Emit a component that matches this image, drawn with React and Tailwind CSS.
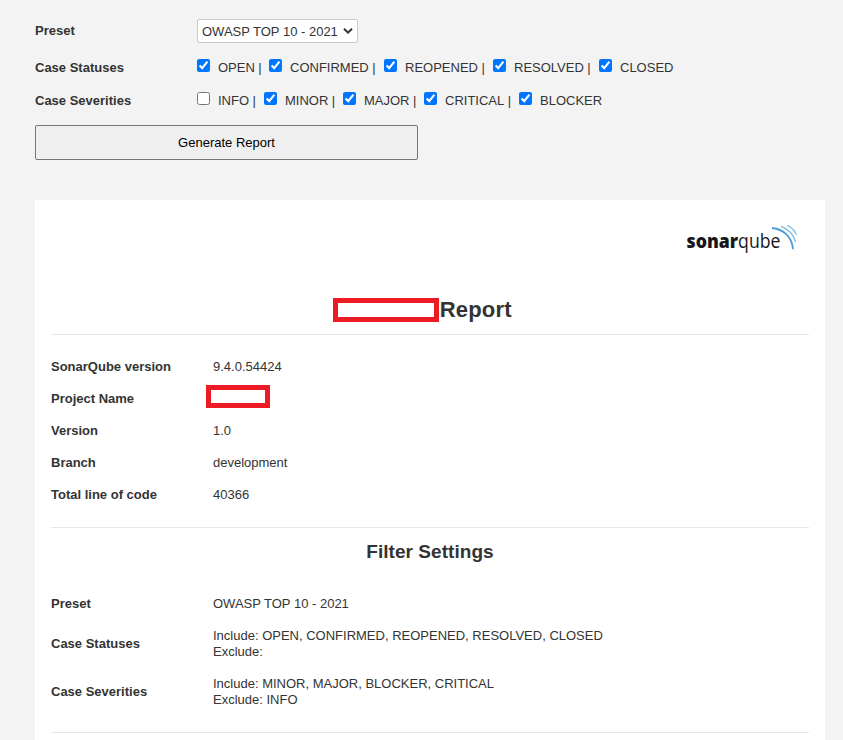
const statuses = [
  { name: 'OPEN', checked: true, width: 'w-[72px]' },
  { name: 'CONFIRMED', checked: true, width: 'w-[115px]' },
  { name: 'REOPENED', checked: true, width: 'w-[109px]' },
  { name: 'RESOLVED', checked: true, width: 'w-[106px]' },
  { name: 'CLOSED', checked: true, width: 'w-[90px]' },
];

const severities = [
  { name: 'INFO', checked: false, width: 'w-[67px]' },
  { name: 'MINOR', checked: true, width: 'w-[79px]' },
  { name: 'MAJOR', checked: true, width: 'w-[81px]' },
  { name: 'CRITICAL', checked: true, width: 'w-[95px]' },
  { name: 'BLOCKER', checked: true, width: 'w-[90px]' },
];

const details = [
  ['SonarQube version', '9.4.0.54424'],
  ['Project Name', null],
  ['Version', '1.0'],
  ['Branch', 'development'],
  ['Total line of code', '40366'],
];

function Options({ items }) {
  return (
    <div className="flex">
      {items.map((item) => (
        <label key={item.name} className={`flex items-start whitespace-nowrap ${item.width}`}>
          <input type="checkbox" defaultChecked={item.checked} className="size-[13px] shrink-0" />
          <span className="ml-2 pt-px">
            {item.name}
            {item !== items[items.length - 1] && <span className="ml-[3.5px]">|</span>}
          </span>
        </label>
      ))}
    </div>
  );
}

function Logo() {
  return (
    <svg className="block h-[30px] w-[112px]" viewBox="0 0 112 30" role="img" aria-label="sonarqube">
      <text x="1.5" y="25.4" fontFamily="'Open Sans', 'Noto Sans', sans-serif" fontSize="19.5" fontWeight="800" fill="#17171b" textLength="94" lengthAdjust="spacingAndGlyphs">
        sonar<tspan fontWeight="400">qube</tspan>
      </text>
      <g fill="none" stroke="#4b9fd5">
        <path d="M87 5C98.5 6 107 14 108 26.2" strokeWidth="1.8" />
        <path d="M96 3.4C103 6 108.5 11.5 110.6 18.8" strokeWidth="1.4" opacity="0.75" />
        <path d="M102.5 2.4C106.5 4.6 109.8 7.8 111.5 11.6" strokeWidth="1.3" opacity="0.7" />
      </g>
    </svg>
  );
}

function Setting({ label, className, children }) {
  return (
    <div className={`flex items-center ${className}`}>
      <div className="w-[162px] font-bold">{label}</div>
      <div>{children}</div>
    </div>
  );
}

export default function App() {
  return (
    <div className="h-[740px] w-[843px] overflow-hidden bg-[#f3f3f3] pt-[19px] pr-[18px] pl-[35px] font-['Liberation_Sans',Arial,sans-serif] text-[13px] leading-4 text-[#333]">
      <div className="flex h-6">
        <div className="w-[162px] pt-1 font-bold">Preset</div>
        <div className="flex h-6 w-[161px] items-center justify-between rounded-[2px] border border-[#cacaca] bg-white pr-1 pl-1">
          <span className="pt-px whitespace-nowrap">OWASP TOP 10 - 2021</span>
          <svg className="h-[6px] w-[10px]" viewBox="0 0 10 6" fill="none" stroke="#333" strokeWidth="2">
            <path d="M1 0.8L5 4.6L9 0.8" />
          </svg>
        </div>
      </div>
      <div className="mt-4 flex h-[33px]">
        <div className="w-[162px] pt-px font-bold">Case Statuses</div>
        <Options items={statuses} />
      </div>
      <div className="flex h-[33px]">
        <div className="w-[162px] pt-px font-bold">Case Severities</div>
        <Options items={severities} />
      </div>
      <button className="block h-[35px] w-[383px] rounded-[2px] border border-[#767676] bg-[#efefef] text-black">
        Generate Report
      </button>

      <main className="mt-10 h-[600px] bg-white px-4 pt-[23px]">
        <div className="flex justify-end pr-3">
          <Logo />
        </div>
        <h1 className="mt-[44px] flex h-[38px] items-start justify-center border-b border-[#e6e6e6] pr-[15px] text-[22px] leading-6 font-bold">
          <span className="mt-px h-6 w-[106px] border-5 border-[#ed1c24] bg-white" />
          <span className="ml-[0.5px] pt-px tracking-[0.2px]">Report</span>
        </h1>
        <div className="mt-4 mb-4">
          {details.map(([label, value]) => (
            <Setting key={label} label={label} className="h-8">
              {value ?? <div className="-mt-[5px] -ml-[7px] h-[23px] w-16 border-5 border-[#ed1c24] bg-white" />}
            </Setting>
          ))}
        </div>
        <section className="border-y border-[#e6e6e6] pb-4">
          <h2 className="pt-3 text-center text-[19px] leading-6 font-bold tracking-[0.05px]">Filter Settings</h2>
          <div className="mt-6">
            <Setting label="Preset" className="h-8">OWASP TOP 10 - 2021</Setting>
            <Setting label="Case Statuses" className="h-12">
              <p>Include: OPEN, CONFIRMED, REOPENED, RESOLVED, CLOSED</p>
              <p>Exclude:</p>
            </Setting>
            <Setting label="Case Severities" className="h-12">
              <p>Include: MINOR, MAJOR, BLOCKER, CRITICAL</p>
              <p>Exclude: INFO</p>
            </Setting>
          </div>
        </section>
      </main>
    </div>
  );
}
